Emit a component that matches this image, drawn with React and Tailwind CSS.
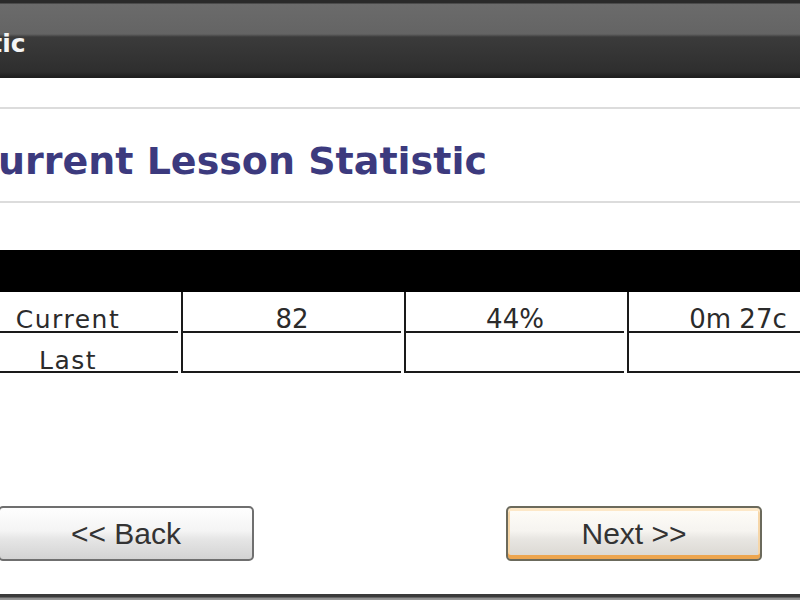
import React from 'react';

const rows = [
  { label: 'Current', speed: '82', accuracy: '44%', time: '0m 27c' },
  { label: 'Last', speed: '', accuracy: '', time: '' },
];

const Cell = ({ children, tall }) => (
  <div
    className={`w-[220px] shrink-0 ${tall ? 'h-[41px]' : 'h-[40px]'} mr-[3px] border-l-2 border-b-2 border-[#1a1a1a] flex justify-center pt-[14px] text-[26px] leading-none text-[#2b2b2b] font-['DejaVu_Sans',sans-serif]`}
  >
    {children}
  </div>
);

const StatRow = ({ row, first }) => (
  <div className="flex ml-[-42px]">
    <div
      className={`w-[220px] shrink-0 ${first ? 'h-[41px]' : 'h-[40px]'} mr-[3px] border-b-2 border-[#1a1a1a] flex justify-center pt-[15px] text-[25px] tracking-[1.5px] leading-none text-[#2b2b2b] font-['DejaVu_Sans',sans-serif]`}
    >
      {row.label}
    </div>
    <Cell tall={first}>{row.speed}</Cell>
    <Cell tall={first}>{row.accuracy}</Cell>
    <Cell tall={first}>{row.time}</Cell>
  </div>
);

export default function App() {
  return (
    <div className="w-[800px] h-[600px] overflow-hidden bg-white flex flex-col">
      {/* window caption */}
      <div className="h-[78px] shrink-0 overflow-hidden pt-[31px] bg-[linear-gradient(to_bottom,#2a2a2a_0px,#2a2a2a_3px,#6b6b6b_4px,#646464_34px,#3b3b3b_37px,#2e2e2e_72px,#1f1f1f_77px,#1f1f1f_78px)]">
        <div className="ml-[-92px] whitespace-nowrap text-[25px] leading-none font-bold text-[#f4f4f4] font-['DejaVu_Sans',sans-serif]">
          Statistic
        </div>
      </div>

      <div className="h-[29px] shrink-0" />
      <div className="h-[2px] shrink-0 bg-[#dcdcdc]" />

      {/* heading */}
      <div className="h-[92px] shrink-0 overflow-hidden pt-[33px]">
        <h1 className="ml-[-30px] whitespace-nowrap text-[38px] leading-none font-bold text-[#3c3a7e] font-['DejaVu_Sans',sans-serif]">
          Current Lesson Statistic
        </h1>
      </div>
      <div className="h-[2px] shrink-0 bg-[#dcdcdc]" />

      <div className="h-[47px] shrink-0" />

      {/* statistics table */}
      <div className="h-[42px] shrink-0 bg-black" />
      {rows.map((row, i) => (
        <StatRow key={row.label} row={row} first={i === 0} />
      ))}

      <div className="h-[133px] shrink-0" />

      {/* navigation */}
      <div className="flex ml-[-2px] gap-[252px] shrink-0">
        <button className="w-[256px] h-[55px] shrink-0 rounded-[5px] border-2 border-[#6f6f6f] bg-[linear-gradient(to_bottom,#fefefe,#f4f4f4_45%,#e6e6e6_60%,#d3d3d3)] text-[30px] leading-none text-[#333] font-['Liberation_Sans',sans-serif]">
          &lt;&lt; Back
        </button>
        <button className="w-[256px] h-[55px] shrink-0 rounded-[5px] border-2 border-[#6b6a5c] bg-[linear-gradient(to_bottom,#fffdf8,#f6f4f0_45%,#e8e6e2_60%,#d9d6d0)] shadow-[inset_0_-4px_0_#eda54e,inset_0_3px_0_#fde8c8,inset_2px_0_0_#f6d6a8,inset_-2px_0_0_#f6d6a8] text-[30px] leading-none text-[#333] font-['Liberation_Sans',sans-serif]">
          Next &gt;&gt;
        </button>
      </div>

      <div className="h-[33px] shrink-0" />
      <div className="h-[6px] shrink-0 bg-[linear-gradient(to_bottom,#3a3a3a_0px,#3a3a3a_3px,#8e8e8e_4px,#9a9a9a_6px)]" />
    </div>
  );
}
